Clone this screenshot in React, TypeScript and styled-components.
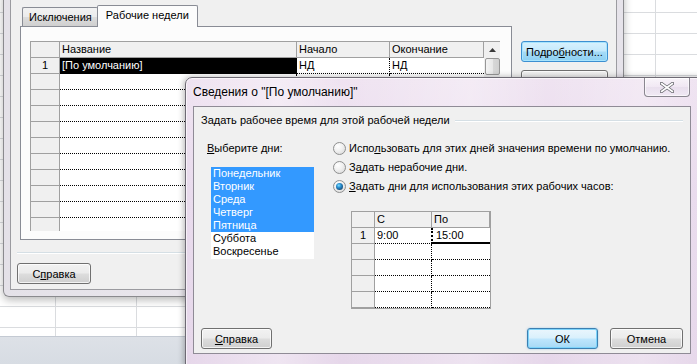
import React from 'react';
import styled, { createGlobalStyle, css } from 'styled-components';

const Global = createGlobalStyle`
  html, body { margin: 0; padding: 0; }
  body {
    width: 697px; height: 364px; overflow: hidden;
    font-family: "Liberation Sans", Tahoma, Arial, sans-serif;
    font-size: 11px; color: #000;
  }
  #root { width: 697px; height: 364px; }
`;

const FONT = `"Liberation Sans", Tahoma, Arial, sans-serif`;

const Desktop = styled.div`
  position: relative;
  width: 697px;
  height: 364px;
  overflow: hidden;
  display: flex;
  flex-direction: column;
`;

const Sheet = styled.div`
  flex: 1;
  background-color: #fff;
  background-image:
    linear-gradient(90deg, transparent 0 55px, #dadcdf 55px 56px, transparent 56px 136px, #dadcdf 136px 137px, transparent 137px 655px, #dadcdf 655px 656px, transparent 656px),
    linear-gradient(180deg, #dadcdf 0 1px, transparent 1px);
  background-size: 100% 100%, 100% 21px;
  background-position: 0 0, 0 12px;
`;

const StatusBand = styled.div`
  height: 27px;
  background: linear-gradient(#dde1e7, #d7dce3);
  border-top: 1px solid #c4cad3;
`;

/* ---------- Back window ---------- */

const BackWindow = styled.div`
  position: absolute;
  left: 3px;
  top: -10px;
  width: 621px;
  box-sizing: border-box;
  padding: 0 6px 6px 6px;
  border: 1px solid #8a8a8e;
  border-top: none;
  border-radius: 0 0 6px 6px;
  background: linear-gradient(90deg, #e4e1e8, #ebe8ee 40%, #e6e3ea);
  box-shadow: 0 3px 8px rgba(0, 0, 0, 0.28);
`;

const BackClient = styled.div`
  background: #f0f0f0;
  border: 1px solid #9b9ba0;
  padding: 15px 5px 5px 6px;
  display: flex;
  flex-direction: column;
`;

const TopRow = styled.div`
  display: flex;
  padding-left: 3px;
`;

const TabControl = styled.div`
  width: 492px;
  display: flex;
  flex-direction: column;
`;

const TabStrip = styled.div`
  display: flex;
  align-items: flex-end;
  height: 20px;
  padding-left: 2px;
  position: relative;
  z-index: 1;
`;

const Tab = styled.div<{ $active?: boolean }>`
  box-sizing: border-box;
  border: 1px solid #898c95;
  border-bottom: none;
  border-radius: 2px 2px 0 0;
  padding: 0 5px;
  display: flex;
  align-items: center;
  font-size: 11px;
  ${(p) =>
    p.$active
      ? css`
          height: 22px;
          margin-bottom: -1px;
          margin-left: -1px;
          background: #fcfcfc;
          padding: 0 8px;
          padding-bottom: 3px;
        `
      : css`
          height: 19px;
          background: linear-gradient(#f2f2f2, #ebebeb 50%, #dddddd 51%, #cfcfcf);
          border-right: none;
          padding: 0 6px;
        `}
`;

const TabPanel = styled.div`
  box-sizing: border-box;
  height: 214px;
  border: 1px solid #898c95;
  background: #fcfcfc;
  padding: 14px 0 0 9px;
`;

const SideButtons = styled.div`
  margin-left: 9px;
  padding-top: 35px;
  display: flex;
  flex-direction: column;
  gap: 8px;
`;

const Separator = styled.div`
  margin-top: 12px;
  height: 1px;
  background: #d5dfe5;
  border-bottom: 1px solid #fff;
`;

const BackFooter = styled.div`
  margin-top: 9px;
  display: flex;
`;

const Button = styled.button<{ $w: number; $blue?: boolean; $glow?: boolean }>`
  box-sizing: border-box;
  width: ${(p) => p.$w}px;
  height: 21px;
  padding: 0;
  font-family: ${FONT};
  font-size: 11px;
  color: #000;
  border: 1px solid #707070;
  border-radius: 3px;
  background: linear-gradient(#f2f2f2 0%, #ebebeb 48%, #dddddd 52%, #cfcfcf 100%);
  box-shadow: inset 0 0 0 1px rgba(255, 255, 255, 0.75);
  ${(p) =>
    p.$blue &&
    css`
      border-color: #3c7fb1;
      background: linear-gradient(#eaf6fd 0%, #d9f0fc 48%, #bee6fd 52%, #a7d9f5 100%);
      box-shadow: inset 0 0 0 1px #7dd4fb, 0 0 2px rgba(60, 160, 230, 0.5);
    `}
  ${(p) =>
    p.$glow &&
    css`
      border-color: #3c8fd1;
      background: linear-gradient(#d8f1fd 0%, #c4e9fc 48%, #a6dbf7 52%, #8dd0f2 100%);
      box-shadow: inset 0 0 0 1px #a8e4fd;
    `}
`;

/* ---------- Grid tables ---------- */

const GridWrap = styled.div`
  display: flex;
  width: 470px;
  height: 190px;
  overflow: hidden;
`;

const Grid = styled.div<{ $cols: string }>`
  display: grid;
  grid-template-columns: ${(p) => p.$cols};
  grid-auto-rows: 16px;
  border-top: 1px solid #a0a0a0;
  border-left: 1px solid #a0a0a0;
  align-content: start;
`;

const HeadCell = styled.div`
  box-sizing: border-box;
  background: #f0f0f0;
  border-right: 1px solid #a0a0a0;
  border-bottom: 1px solid #a0a0a0;
  padding-left: 2px;
  line-height: 15px;
  white-space: nowrap;
  overflow: hidden;
`;

const RowNum = styled(HeadCell)`
  text-align: center;
  padding-left: 0;
`;

const Cell = styled.div<{ $sel?: boolean; $active?: boolean; $last?: boolean }>`
  box-sizing: border-box;
  background: #fff;
  border-bottom: 1px dotted #000;
  border-right: ${(p) => (p.$last ? 'none' : '1px dotted #000')};
  padding-left: 2px;
  line-height: 15px;
  white-space: nowrap;
  overflow: hidden;
  ${(p) =>
    p.$sel &&
    css`
      background: #000;
      color: #fff;
    `}
  ${(p) =>
    p.$active &&
    css`
      border-left: 2px dotted #000;
      border-bottom: 2px solid #000;
      margin-left: -1px;
      padding-left: 3px;
      line-height: 14px;
    `}
`;

const Scroll = styled.div`
  width: 16px;
  border-top: 1px solid #a0a0a0;
  background: #f0f0f0;
  display: flex;
  flex-direction: column;
  align-items: center;
`;

const ScrollArrow = styled.div`
  height: 16px;
  width: 16px;
  display: flex;
  align-items: center;
  justify-content: center;
`;

const ScrollThumb = styled.div`
  box-sizing: border-box;
  width: 15px;
  height: 17px;
  border: 1px solid #979797;
  border-radius: 2px;
  background: linear-gradient(90deg, #f4f4f4, #e8e8e8 50%, #d8d8d8 51%, #d0d0d0);
`;

/* ---------- Front window ---------- */

const FrontWindow = styled.div`
  position: absolute;
  left: 185px;
  top: 77px;
  width: 520px;
  box-sizing: border-box;
  border: 1px solid #6e6a74;
  border-radius: 7px 7px 0 0;
  padding: 0 13px 12px 7px;
  background:
    linear-gradient(90deg, rgba(255,255,255,0) 0%, rgba(255,255,255,0.35) 18%, rgba(255,255,255,0) 30%, rgba(255,255,255,0.3) 55%, rgba(255,255,255,0) 70%, rgba(255,255,255,0.25) 88%, rgba(255,255,255,0) 100%),
    linear-gradient(#efe3f1, #e9dbed 40%, #e6d7ea);
  box-shadow: -1px 0 6px rgba(0, 0, 0, 0.3), inset 0 0 0 1px rgba(255, 255, 255, 0.6);
`;

const TitleBar = styled.div`
  height: 28px;
  display: flex;
  align-items: flex-start;
`;

const Title = styled.div`
  font-family: ${FONT};
  font-size: 12px;
  margin-top: 7px;
  color: #000;
  text-shadow: 0 0 8px rgba(255, 255, 255, 0.9);
`;

const CloseBtn = styled.div`
  margin-left: auto;
  margin-right: 1px;
  width: 46px;
  height: 19px;
  box-sizing: border-box;
  border: 1px solid #8a8690;
  border-top: none;
  border-radius: 0 0 4px 4px;
  background: linear-gradient(rgba(255,255,255,0.55), rgba(240,232,244,0.4) 50%, rgba(225,215,232,0.5) 51%, rgba(240,235,245,0.6));
  box-shadow: inset 0 0 0 1px rgba(255, 255, 255, 0.6);
  display: flex;
  align-items: center;
  justify-content: center;
`;

const FrontClient = styled.div`
  box-sizing: border-box;
  height: 248px;
  background: #f0f0f0;
  border: 1px solid #8f8b96;
  padding: 7px 7px 4px 7px;
  display: flex;
  flex-direction: column;
`;

const GroupHeader = styled.div`
  display: flex;
  align-items: center;
  gap: 5px;
  height: 13px;
  line-height: 13px;
`;

const GroupLine = styled.div`
  flex: 1;
  height: 1px;
  background: #d5dfe5;
  border-bottom: 1px solid #fff;
  margin-top: 1px;
`;

const Body = styled.div`
  display: flex;
  margin-top: 15px;
`;

const DaysColumn = styled.div`
  width: 126px;
  padding-left: 6px;
  display: flex;
  flex-direction: column;
`;

const Label = styled.div`
  line-height: 13px;
`;

const ListBox = styled.div`
  margin-top: 12px;
  margin-left: 4px;
  width: 103px;
  height: 92px;
  background: #fff;
`;

const ListItem = styled.div<{ $sel?: boolean }>`
  height: 13px;
  line-height: 13px;
  padding-left: 2px;
  background: ${(p) => (p.$sel ? '#3399ff' : '#fff')};
  color: ${(p) => (p.$sel ? '#fff' : '#000')};
`;

const OptionsColumn = styled.div`
  display: flex;
  flex-direction: column;
`;

const RadioRow = styled.div`
  display: flex;
  align-items: center;
  gap: 3px;
  height: 13px;
  line-height: 13px;
  margin-bottom: 6px;
`;

const Radio = styled.span<{ $checked?: boolean }>`
  position: relative;
  box-sizing: border-box;
  width: 13px;
  height: 13px;
  border-radius: 50%;
  border: 1px solid #8e8f8f;
  background: radial-gradient(circle at 35% 30%, #ffffff 0%, #f0f0f0 45%, #d4d4d4 100%);
  flex: none;
  ${(p) =>
    p.$checked &&
    css`
      &::after {
        content: '';
        position: absolute;
        left: 2px;
        top: 2px;
        width: 7px;
        height: 7px;
        border-radius: 50%;
        background: radial-gradient(circle at 40% 35%, #7fe0ff 0%, #2a8fd0 35%, #15456f 80%);
      }
    `}
`;

const TimeTable = styled.div`
  margin-top: 12px;
  margin-left: 18px;
  width: 140px;
  border-right: 1px solid #a0a0a0;
  border-bottom: 1px solid #a0a0a0;
  box-sizing: border-box;
`;

const FrontFooter = styled.div`
  margin-top: auto;
  display: flex;
  gap: 12px;
`;

const Spacer = styled.div`
  flex: 1;
`;

const backRows = Array.from({ length: 11 }, (_, i) => i);
const timeRows = Array.from({ length: 5 }, (_, i) => i);
const days = ['Понедельник', 'Вторник', 'Среда', 'Четверг', 'Пятница', 'Суббота', 'Воскресенье'];

export default function App() {
  return (
    <>
      <Global />
      <Desktop>
        <Sheet />
        <StatusBand />

        <BackWindow>
          <BackClient>
            <TopRow>
              <TabControl>
                <TabStrip>
                  <Tab>Исключения</Tab>
                  <Tab $active>Рабочие недели</Tab>
                </TabStrip>
                <TabPanel>
                  <GridWrap>
                    <Grid $cols="29px 237px 93px 94px">
                      <RowNum />
                      <HeadCell>Название</HeadCell>
                      <HeadCell>Начало</HeadCell>
                      <HeadCell>Окончание</HeadCell>
                      {backRows.map((i) => (
                        <React.Fragment key={i}>
                          <RowNum>{i === 0 ? '1' : ''}</RowNum>
                          <Cell $sel={i === 0}>{i === 0 ? '[По умолчанию]' : ''}</Cell>
                          <Cell>{i === 0 ? 'НД' : ''}</Cell>
                          <Cell $last>{i === 0 ? 'НД' : ''}</Cell>
                        </React.Fragment>
                      ))}
                    </Grid>
                    <Scroll>
                      <ScrollArrow>
                        <svg width="7" height="4" viewBox="0 0 7 4">
                          <path d="M0 4 L3.5 0 L7 4 Z" fill="#3a3a3a" />
                        </svg>
                      </ScrollArrow>
                      <ScrollThumb />
                    </Scroll>
                  </GridWrap>
                </TabPanel>
              </TabControl>
              <SideButtons>
                <Button $w={87} $glow>
                  Подро<u>б</u>ности...
                </Button>
                <Button $w={87}>Удалить</Button>
              </SideButtons>
            </TopRow>
            <Separator />
            <BackFooter>
              <Button $w={74}>
                С<u>п</u>равка
              </Button>
            </BackFooter>
          </BackClient>
        </BackWindow>

        <FrontWindow>
          <TitleBar>
            <Title>Сведения о "[По умолчанию]"</Title>
            <CloseBtn>
              <svg width="14" height="11" viewBox="0 0 14 11">
                <path
                  d="M1.5 1.5 L12.5 9.5 M12.5 1.5 L1.5 9.5"
                  stroke="#6a6a70"
                  strokeWidth="3.4"
                  strokeLinecap="round"
                  fill="none"
                />
                <path
                  d="M1.5 1.5 L12.5 9.5 M12.5 1.5 L1.5 9.5"
                  stroke="#ffffff"
                  strokeWidth="1.6"
                  strokeLinecap="round"
                  fill="none"
                />
              </svg>
            </CloseBtn>
          </TitleBar>
          <FrontClient>
            <GroupHeader>
              <span>Задать рабочее время для этой рабочей недели</span>
              <GroupLine />
            </GroupHeader>
            <Body>
              <DaysColumn>
                <Label>
                  <u>В</u>ыберите дни:
                </Label>
                <ListBox>
                  {days.map((d, i) => (
                    <ListItem key={d} $sel={i < 5}>
                      {d}
                    </ListItem>
                  ))}
                </ListBox>
              </DaysColumn>
              <OptionsColumn>
                <RadioRow>
                  <Radio />
                  <span>
                    Испо<u>л</u>ьзовать для этих дней значения времени по умолчанию.
                  </span>
                </RadioRow>
                <RadioRow>
                  <Radio />
                  <span>
                    З<u>а</u>дать нерабочие дни.
                  </span>
                </RadioRow>
                <RadioRow>
                  <Radio $checked />
                  <span>
                    <u>З</u>адать дни для использования этих рабочих часов:
                  </span>
                </RadioRow>
                <TimeTable>
                  <Grid $cols="23px 57px 58px">
                    <RowNum />
                    <HeadCell>С</HeadCell>
                    <HeadCell>По</HeadCell>
                    {timeRows.map((i) => (
                      <React.Fragment key={i}>
                        <RowNum>{i === 0 ? '1' : ''}</RowNum>
                        <Cell>{i === 0 ? '9:00' : ''}</Cell>
                        <Cell $last $active={i === 0}>
                          {i === 0 ? '15:00' : ''}
                        </Cell>
                      </React.Fragment>
                    ))}
                  </Grid>
                </TimeTable>
              </OptionsColumn>
            </Body>
            <FrontFooter>
              <Button $w={71}>
                <u>С</u>правка
              </Button>
              <Spacer />
              <Button $w={71} $blue>
                ОК
              </Button>
              <Button $w={73}>Отмена</Button>
            </FrontFooter>
          </FrontClient>
        </FrontWindow>
      </Desktop>
    </>
  );
}
